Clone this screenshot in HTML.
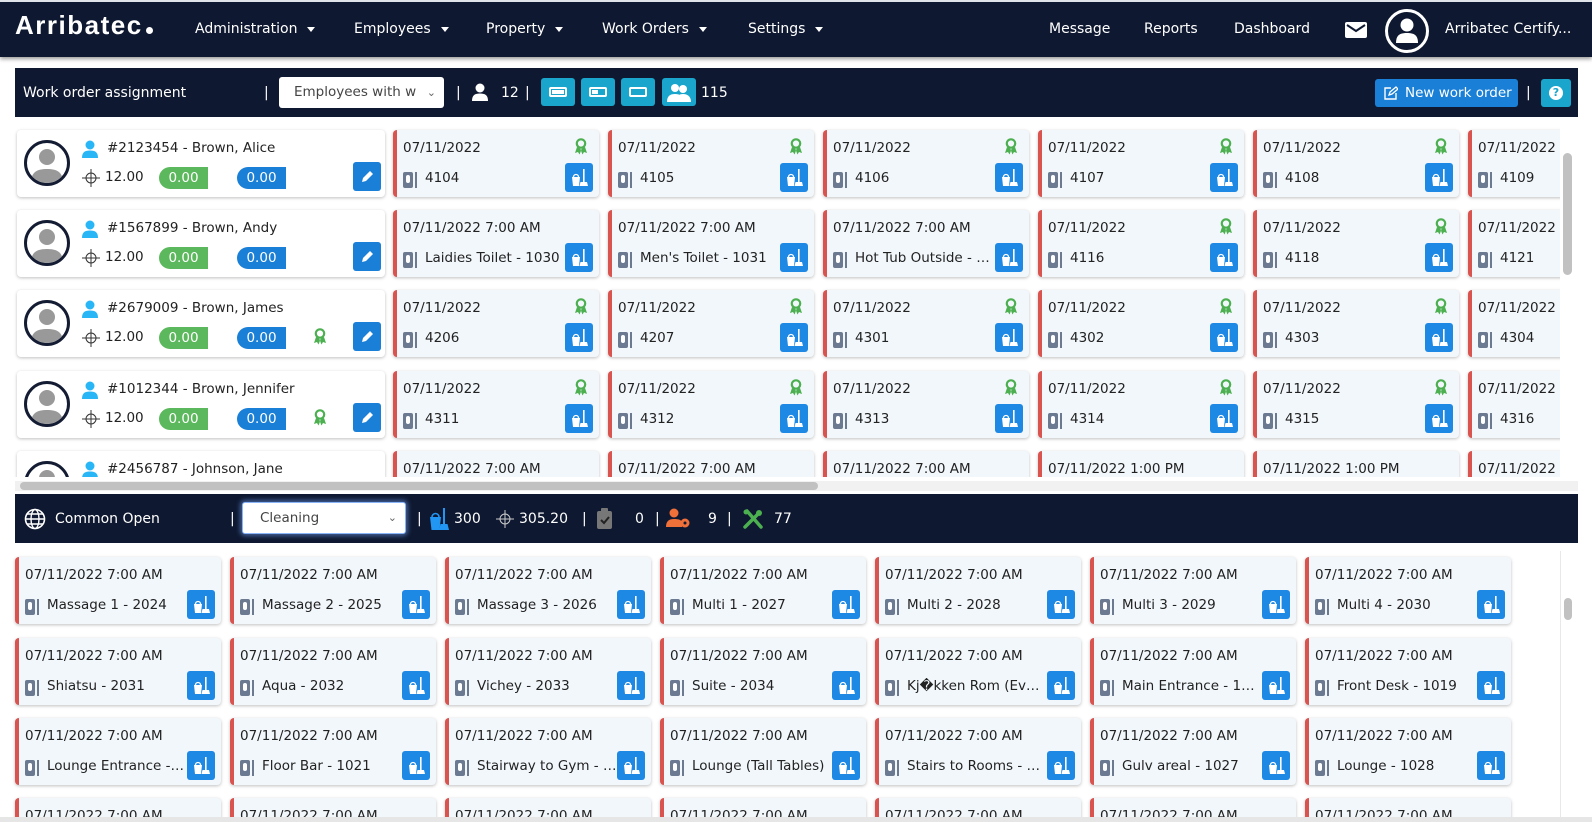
<!DOCTYPE html>
<html><head><meta charset="utf-8"><style>
*{box-sizing:border-box;margin:0;padding:0}
html,body{width:1592px;height:822px;overflow:hidden}
body{background:#fff;font-family:"DejaVu Sans","Liberation Sans",sans-serif;color:#222;position:relative}
.a{position:absolute}
.nav{left:0;top:0;width:1592px;height:57px;background:#0e1830;border-top:2px solid #dfe3ea;box-shadow:0 2px 4px rgba(0,0,0,.4)}
.nav .m{position:absolute;top:19px;color:#fff;font-size:14px;white-space:nowrap}
.caret{display:inline-block;width:0;height:0;border-left:4px solid transparent;border-right:4px solid transparent;border-top:5px solid #fff;margin-left:10px;vertical-align:middle}
.bar{background:#0e1830;color:#fff;font-size:14px}
.bar .t{position:absolute;top:50%;transform:translateY(-50%);white-space:nowrap}
.card{position:absolute;width:206px;height:67px;background:#f2f7fb;border-left:4px solid #d9534f;border-radius:4px;box-shadow:0 1px 3px rgba(0,0,0,.25);font-size:13.5px;overflow:hidden}
.card .d{position:absolute;left:6px;top:10px;white-space:nowrap}
.card .k{position:absolute;left:6px;top:42px;width:10px;height:16px;background:#6b7a90;border-radius:2px}
.card .k:after{content:"";position:absolute;left:3px;top:3px;width:4px;height:8px;background:#fff;border-radius:2px}
.card .k:before{content:"";position:absolute;left:12px;top:0;width:2px;height:16px;background:#6b7a90}
.card .n{position:absolute;left:28px;top:40px;white-space:nowrap;width:140px;overflow:hidden;text-overflow:ellipsis}
.btn{position:absolute;width:28px;height:29px;background:#1e88e5;border-radius:3px}
.card .btn{right:6px;top:33px}
.rib{position:absolute;width:14px;height:17px}
.card .rib{right:11px;top:8px}
.emp{position:absolute;left:17px;width:368px;height:67px;background:#fff;border-radius:4px;box-shadow:0 1px 3px rgba(0,0,0,.25);font-size:13.5px}
.av{position:absolute;left:7px;top:10px;width:46px;height:46px;border:3px solid #141c33;border-radius:50%;overflow:hidden;background:#fff}
.pill{position:absolute;top:37px;width:49px;height:22px;color:#fff;text-align:center;line-height:22px;font-size:13.5px;border-radius:11px 0 0 11px}
</style></head><body>
<svg width="0" height="0" style="position:absolute"><defs>
<symbol id="bk" viewBox="0 0 28 29"><path d="M7 14h8l-1 9H8z" fill="#fff"/><path d="M8.5 14a2.5 2.5 0 0 1 5 0" fill="none" stroke="#fff" stroke-width="1.3"/><rect x="18" y="6" width="1.6" height="13" fill="#fff"/><path d="M15.5 19h6.5l1 4h-8.5z" fill="#fff"/></symbol>
<symbol id="rb" viewBox="0 0 14 17"><circle cx="7" cy="5.5" r="4.2" fill="none" stroke="#4caf50" stroke-width="2.2"/><path d="M3 9l-2 6 3-1 1.5 2.5 2-5zM11 9l2 6-3-1-1.5 2.5-2-5z" fill="#4caf50"/></symbol>
<symbol id="pu" viewBox="0 0 16 18"><circle cx="8" cy="5" r="4.5" fill="#29b6f6"/><path d="M0 18c0-6 3-7.5 8-7.5s8 1.5 8 7.5z" fill="#29b6f6"/></symbol>
<symbol id="ch" viewBox="0 0 18 18"><circle cx="9" cy="9" r="5" fill="none" stroke="#333" stroke-width="1"/><path d="M9 0v18M0 9h18" stroke="#333" stroke-width="1"/></symbol>
<symbol id="avp" viewBox="0 0 40 40"><circle cx="20" cy="14" r="8" fill="#999"/><path d="M4 40c0-11 6-14 16-14s16 3 16 14z" fill="#999"/></symbol>
</defs></svg>

<div class="a nav">
<div class="m" style="left:15px;top:8px;font-size:26px;font-family:'Liberation Sans',sans-serif;font-weight:bold;letter-spacing:1.5px">Arribatec<span style="display:inline-block;width:7px;height:7px;background:#fff;border-radius:50%;margin-left:3px"></span></div>
<div class="m" style="left:195px">Administration<span class="caret"></span></div>
<div class="m" style="left:354px">Employees<span class="caret"></span></div>
<div class="m" style="left:486px">Property<span class="caret"></span></div>
<div class="m" style="left:602px">Work Orders<span class="caret"></span></div>
<div class="m" style="left:748px">Settings<span class="caret"></span></div>
<div class="m" style="left:1049px">Message</div>
<div class="m" style="left:1144px">Reports</div>
<div class="m" style="left:1234px">Dashboard</div>
<svg class="a" style="left:1345px;top:20px" width="22" height="16" viewBox="0 0 22 16"><rect x="0" y="0" width="22" height="16" rx="2" fill="#fff"/><path d="M2 3l9 6 9-6" fill="none" stroke="#0e1830" stroke-width="2"/></svg>
<div class="a" style="left:1385px;top:7px;width:44px;height:44px;border:3px solid #fff;border-radius:50%;overflow:hidden"><svg width="38" height="38" viewBox="0 0 38 38"><circle cx="19" cy="13" r="6.5" fill="#fff"/><path d="M8 31c0-8 4-10 11-10s11 2 11 10z" fill="#fff"/></svg></div>
<div class="m" style="left:1445px">Arribatec Certify...</div>
</div>

<div class="a bar" style="left:15px;top:68px;width:1563px;height:49px">
<div class="t" style="left:8px">Work order assignment</div>
<div class="t" style="left:249px">|</div>
<div class="a" style="left:264px;top:9px;width:165px;height:31px;background:#fff;border-radius:3px;color:#444;font-size:13.5px;line-height:31px;padding-left:15px">Employees with w<span style="position:absolute;right:8px;color:#666;font-size:11px">&#8964;</span></div>
<div class="t" style="left:441px">|</div>
<svg class="a" style="left:457px;top:15px" width="16" height="18"><circle cx="8" cy="5" r="4.5" fill="#fff"/><path d="M0 18c0-6 3-7.5 8-7.5s8 1.5 8 7.5z" fill="#fff"/></svg>
<div class="t" style="left:486px">12</div>
<div class="t" style="left:510px">|</div>
<div class="a" style="left:526px;top:10px;width:34px;height:28px;background:#1aa6cc;border-radius:3px"><div style="position:absolute;left:8px;top:9px;width:18px;height:10px;border:2px solid #fff;border-radius:2px"><div style="margin:1px;height:4px;background:#fff"></div></div></div>
<div class="a" style="left:566px;top:10px;width:34px;height:28px;background:#1aa6cc;border-radius:3px"><div style="position:absolute;left:8px;top:9px;width:18px;height:10px;border:2px solid #fff;border-radius:2px"><div style="margin:1px;width:6px;height:4px;background:#fff"></div></div></div>
<div class="a" style="left:606px;top:10px;width:34px;height:28px;background:#1aa6cc;border-radius:3px"><div style="position:absolute;left:8px;top:9px;width:18px;height:10px;border:2px solid #fff;border-radius:2px"></div></div>
<div class="a" style="left:647px;top:10px;width:34px;height:28px;background:#1aa6cc;border-radius:3px"><svg width="34" height="28"><circle cx="13" cy="10" r="4" fill="#fff"/><path d="M5 24c0-6 3-8 8-8s8 2 8 8z" fill="#fff"/><circle cx="21" cy="11" r="4" fill="#fff"/><path d="M14 24c0-6 3-8 7-8s8 2 8 8z" fill="#fff"/></svg></div>
<div class="t" style="left:686px">115</div>
<div class="a" style="left:1360px;top:11px;width:143px;height:28px;background:#1a7fd6;border-radius:3px;font-size:13.5px;line-height:28px;padding-left:30px;white-space:nowrap">New work order<svg class="a" style="left:9px;top:7px" width="14" height="14" viewBox="0 0 14 14"><path d="M7 2H1v11h11V7" fill="none" stroke="#fff" stroke-width="1.4"/><path d="M5 9l1-3 6-5 2 2-6 5z" fill="none" stroke="#fff" stroke-width="1.3"/></svg></div>
<div class="t" style="left:1511px">|</div>
<div class="a" style="left:1526px;top:11px;width:30px;height:28px;background:#1aa6cc;border-radius:3px"><div style="position:absolute;left:8px;top:7px;width:14px;height:14px;border-radius:50%;background:#fff;color:#1aa6cc;font-size:11px;font-weight:bold;text-align:center;line-height:14px">?</div></div>
</div>

<div class="a" style="left:0;top:120px;width:1560px;height:357px;overflow:hidden">
<div class="emp" style="top:10px"><div class="av"><svg width="40" height="40"><use href="#avp"/></svg></div><svg class="a" style="left:65px;top:10px" width="16" height="18"><use href="#pu"/></svg><div class="a" style="left:90px;top:10px">#2123454 - Brown, Alice</div><svg class="a" style="left:65px;top:39px" width="18" height="18"><use href="#ch"/></svg><div class="a" style="left:88px;top:39px">12.00</div><div class="pill" style="left:142px;background:#5cb85c">0.00</div><div class="pill" style="left:220px;background:#1a7fd6">0.00</div><div class="btn" style="left:336px;top:32px;background:#1a7fd6"><svg width="28" height="29"><path d="M9 20l1-4 7-7 3 3-7 7z" fill="#fff"/></svg></div></div>
<div class="emp" style="top:90px"><div class="av"><svg width="40" height="40"><use href="#avp"/></svg></div><svg class="a" style="left:65px;top:10px" width="16" height="18"><use href="#pu"/></svg><div class="a" style="left:90px;top:10px">#1567899 - Brown, Andy</div><svg class="a" style="left:65px;top:39px" width="18" height="18"><use href="#ch"/></svg><div class="a" style="left:88px;top:39px">12.00</div><div class="pill" style="left:142px;background:#5cb85c">0.00</div><div class="pill" style="left:220px;background:#1a7fd6">0.00</div><div class="btn" style="left:336px;top:32px;background:#1a7fd6"><svg width="28" height="29"><path d="M9 20l1-4 7-7 3 3-7 7z" fill="#fff"/></svg></div></div>
<div class="emp" style="top:170px"><div class="av"><svg width="40" height="40"><use href="#avp"/></svg></div><svg class="a" style="left:65px;top:10px" width="16" height="18"><use href="#pu"/></svg><div class="a" style="left:90px;top:10px">#2679009 - Brown, James</div><svg class="a" style="left:65px;top:39px" width="18" height="18"><use href="#ch"/></svg><div class="a" style="left:88px;top:39px">12.00</div><div class="pill" style="left:142px;background:#5cb85c">0.00</div><div class="pill" style="left:220px;background:#1a7fd6">0.00</div><svg class="rib" style="left:296px;top:38px"><use href="#rb"/></svg><div class="btn" style="left:336px;top:32px;background:#1a7fd6"><svg width="28" height="29"><path d="M9 20l1-4 7-7 3 3-7 7z" fill="#fff"/></svg></div></div>
<div class="emp" style="top:251px"><div class="av"><svg width="40" height="40"><use href="#avp"/></svg></div><svg class="a" style="left:65px;top:10px" width="16" height="18"><use href="#pu"/></svg><div class="a" style="left:90px;top:10px">#1012344 - Brown, Jennifer</div><svg class="a" style="left:65px;top:39px" width="18" height="18"><use href="#ch"/></svg><div class="a" style="left:88px;top:39px">12.00</div><div class="pill" style="left:142px;background:#5cb85c">0.00</div><div class="pill" style="left:220px;background:#1a7fd6">0.00</div><svg class="rib" style="left:296px;top:38px"><use href="#rb"/></svg><div class="btn" style="left:336px;top:32px;background:#1a7fd6"><svg width="28" height="29"><path d="M9 20l1-4 7-7 3 3-7 7z" fill="#fff"/></svg></div></div>
<div class="emp" style="top:331px"><div class="av"><svg width="40" height="40"><use href="#avp"/></svg></div><svg class="a" style="left:65px;top:10px" width="16" height="18"><use href="#pu"/></svg><div class="a" style="left:90px;top:10px">#2456787 - Johnson, Jane</div></div>

<div class="card" style="left:393px;top:10px"><div class="d">07/11/2022</div><svg class="rib"><use href="#rb"/></svg><div class="k"></div><div class="n">4104</div><svg class="btn"><use href="#bk"/></svg></div>
<div class="card" style="left:608px;top:10px"><div class="d">07/11/2022</div><svg class="rib"><use href="#rb"/></svg><div class="k"></div><div class="n">4105</div><svg class="btn"><use href="#bk"/></svg></div>
<div class="card" style="left:823px;top:10px"><div class="d">07/11/2022</div><svg class="rib"><use href="#rb"/></svg><div class="k"></div><div class="n">4106</div><svg class="btn"><use href="#bk"/></svg></div>
<div class="card" style="left:1038px;top:10px"><div class="d">07/11/2022</div><svg class="rib"><use href="#rb"/></svg><div class="k"></div><div class="n">4107</div><svg class="btn"><use href="#bk"/></svg></div>
<div class="card" style="left:1253px;top:10px"><div class="d">07/11/2022</div><svg class="rib"><use href="#rb"/></svg><div class="k"></div><div class="n">4108</div><svg class="btn"><use href="#bk"/></svg></div>
<div class="card" style="left:1468px;top:10px"><div class="d">07/11/2022</div><div class="k"></div><div class="n">4109</div></div>

<div class="card" style="left:393px;top:90px"><div class="d">07/11/2022 7:00 AM</div><div class="k"></div><div class="n">Laidies Toilet - 1030</div><svg class="btn"><use href="#bk"/></svg></div>
<div class="card" style="left:608px;top:90px"><div class="d">07/11/2022 7:00 AM</div><div class="k"></div><div class="n">Men's Toilet - 1031</div><svg class="btn"><use href="#bk"/></svg></div>
<div class="card" style="left:823px;top:90px"><div class="d">07/11/2022 7:00 AM</div><div class="k"></div><div class="n">Hot Tub Outside - 1032</div><svg class="btn"><use href="#bk"/></svg></div>
<div class="card" style="left:1038px;top:90px"><div class="d">07/11/2022</div><svg class="rib"><use href="#rb"/></svg><div class="k"></div><div class="n">4116</div><svg class="btn"><use href="#bk"/></svg></div>
<div class="card" style="left:1253px;top:90px"><div class="d">07/11/2022</div><svg class="rib"><use href="#rb"/></svg><div class="k"></div><div class="n">4118</div><svg class="btn"><use href="#bk"/></svg></div>
<div class="card" style="left:1468px;top:90px"><div class="d">07/11/2022</div><div class="k"></div><div class="n">4121</div></div>

<div class="card" style="left:393px;top:170px"><div class="d">07/11/2022</div><svg class="rib"><use href="#rb"/></svg><div class="k"></div><div class="n">4206</div><svg class="btn"><use href="#bk"/></svg></div>
<div class="card" style="left:608px;top:170px"><div class="d">07/11/2022</div><svg class="rib"><use href="#rb"/></svg><div class="k"></div><div class="n">4207</div><svg class="btn"><use href="#bk"/></svg></div>
<div class="card" style="left:823px;top:170px"><div class="d">07/11/2022</div><svg class="rib"><use href="#rb"/></svg><div class="k"></div><div class="n">4301</div><svg class="btn"><use href="#bk"/></svg></div>
<div class="card" style="left:1038px;top:170px"><div class="d">07/11/2022</div><svg class="rib"><use href="#rb"/></svg><div class="k"></div><div class="n">4302</div><svg class="btn"><use href="#bk"/></svg></div>
<div class="card" style="left:1253px;top:170px"><div class="d">07/11/2022</div><svg class="rib"><use href="#rb"/></svg><div class="k"></div><div class="n">4303</div><svg class="btn"><use href="#bk"/></svg></div>
<div class="card" style="left:1468px;top:170px"><div class="d">07/11/2022</div><div class="k"></div><div class="n">4304</div></div>

<div class="card" style="left:393px;top:251px"><div class="d">07/11/2022</div><svg class="rib"><use href="#rb"/></svg><div class="k"></div><div class="n">4311</div><svg class="btn"><use href="#bk"/></svg></div>
<div class="card" style="left:608px;top:251px"><div class="d">07/11/2022</div><svg class="rib"><use href="#rb"/></svg><div class="k"></div><div class="n">4312</div><svg class="btn"><use href="#bk"/></svg></div>
<div class="card" style="left:823px;top:251px"><div class="d">07/11/2022</div><svg class="rib"><use href="#rb"/></svg><div class="k"></div><div class="n">4313</div><svg class="btn"><use href="#bk"/></svg></div>
<div class="card" style="left:1038px;top:251px"><div class="d">07/11/2022</div><svg class="rib"><use href="#rb"/></svg><div class="k"></div><div class="n">4314</div><svg class="btn"><use href="#bk"/></svg></div>
<div class="card" style="left:1253px;top:251px"><div class="d">07/11/2022</div><svg class="rib"><use href="#rb"/></svg><div class="k"></div><div class="n">4315</div><svg class="btn"><use href="#bk"/></svg></div>
<div class="card" style="left:1468px;top:251px"><div class="d">07/11/2022</div><div class="k"></div><div class="n">4316</div></div>

<div class="card" style="left:393px;top:331px"><div class="d">07/11/2022 7:00 AM</div></div>
<div class="card" style="left:608px;top:331px"><div class="d">07/11/2022 7:00 AM</div></div>
<div class="card" style="left:823px;top:331px"><div class="d">07/11/2022 7:00 AM</div></div>
<div class="card" style="left:1038px;top:331px"><div class="d">07/11/2022 1:00 PM</div></div>
<div class="card" style="left:1253px;top:331px"><div class="d">07/11/2022 1:00 PM</div></div>
<div class="card" style="left:1468px;top:331px"><div class="d">07/11/2022</div></div>
</div>
<div class="a" style="left:1560px;top:120px;width:18px;height:357px;background:#fff"></div>
<div class="a" style="left:1563px;top:153px;width:9px;height:122px;background:#c1c1c1;border-radius:5px"></div>
<div class="a" style="left:15px;top:481px;width:1563px;height:10px;background:#f1f1f1"></div>
<div class="a" style="left:20px;top:482px;width:798px;height:8px;background:#c1c1c1;border-radius:4px"></div>

<div class="a bar" style="left:15px;top:494px;width:1563px;height:49px">
<svg class="a" style="left:9px;top:14px" width="22" height="22" viewBox="0 0 22 22"><circle cx="11" cy="11" r="9.5" fill="none" stroke="#fff" stroke-width="1.6"/><ellipse cx="11" cy="11" rx="4" ry="9.5" fill="none" stroke="#fff" stroke-width="1.4"/><path d="M1.5 11h19M3 6h16M3 16h16" stroke="#fff" stroke-width="1.4"/></svg>
<div class="t" style="left:40px">Common Open</div>
<div class="t" style="left:215px">|</div>
<div class="a" style="left:227px;top:8px;width:164px;height:32px;background:#fff;border-radius:3px;border:1px solid #8ab4f8;box-shadow:0 0 5px 2px rgba(120,170,255,.5);color:#444;font-size:13.5px;line-height:30px;padding-left:17px">Cleaning<span style="position:absolute;right:8px;color:#666;font-size:11px">&#8964;</span></div>
<div class="t" style="left:402px">|</div>
<svg class="a" style="left:414px;top:13px" width="22" height="24" viewBox="0 0 22 24"><path d="M1 10h11l-1.5 13h-8z" fill="#2196f3"/><path d="M3 10a3.5 3.5 0 0 1 7 0" fill="none" stroke="#2196f3" stroke-width="1.6"/><rect x="14" y="1" width="2" height="16" fill="#2196f3"/><path d="M11.5 17h7l1.5 6h-10z" fill="#2196f3"/></svg>
<div class="t" style="left:439px">300</div>
<svg class="a" style="left:481px;top:16px" width="18" height="18"><circle cx="9" cy="9" r="5" fill="none" stroke="#ccc" stroke-width="1"/><path d="M9 0v18M0 9h18" stroke="#ccc" stroke-width="1"/></svg>
<div class="t" style="left:504px">305.20</div>
<div class="t" style="left:567px">|</div>
<svg class="a" style="left:582px;top:14px" width="15" height="21" viewBox="0 0 15 21"><rect x="0" y="3" width="15" height="18" rx="2" fill="#777"/><rect x="4" y="0" width="7" height="5" rx="1" fill="#777"/><path d="M4 12l3 3 5-6" fill="none" stroke="#222" stroke-width="2"/></svg>
<div class="t" style="left:620px">0</div>
<div class="t" style="left:640px">|</div>
<svg class="a" style="left:651px;top:14px" width="25" height="21" viewBox="0 0 25 21"><circle cx="8" cy="5" r="4.5" fill="#f0703a"/><path d="M0 19c0-6 3-8 8-8s7 1 8 3v5z" fill="#f0703a"/><circle cx="19" cy="15" r="4.5" fill="#f0703a"/><circle cx="19" cy="15" r="1.5" fill="#0e1830"/></svg>
<div class="t" style="left:693px">9</div>
<div class="t" style="left:712px">|</div>
<svg class="a" style="left:727px;top:14px" width="22" height="22" viewBox="0 0 22 22"><path d="M3 19L17 5M5 3l14 16" stroke="#4caf50" stroke-width="3.5" stroke-linecap="round"/><circle cx="17" cy="5" r="3" fill="#4caf50"/><circle cx="4" cy="4" r="2.5" fill="#4caf50"/></svg>
<div class="t" style="left:759px">77</div>
</div>

<div class="a" style="left:0;top:546px;width:1560px;height:271px;overflow:hidden">
<div class="card" style="left:15px;top:11px"><div class="d">07/11/2022 7:00 AM</div><div class="k"></div><div class="n">Massage 1 - 2024</div><svg class="btn"><use href="#bk"/></svg></div>
<div class="card" style="left:230px;top:11px"><div class="d">07/11/2022 7:00 AM</div><div class="k"></div><div class="n">Massage 2 - 2025</div><svg class="btn"><use href="#bk"/></svg></div>
<div class="card" style="left:445px;top:11px"><div class="d">07/11/2022 7:00 AM</div><div class="k"></div><div class="n">Massage 3 - 2026</div><svg class="btn"><use href="#bk"/></svg></div>
<div class="card" style="left:660px;top:11px"><div class="d">07/11/2022 7:00 AM</div><div class="k"></div><div class="n">Multi 1 - 2027</div><svg class="btn"><use href="#bk"/></svg></div>
<div class="card" style="left:875px;top:11px"><div class="d">07/11/2022 7:00 AM</div><div class="k"></div><div class="n">Multi 2 - 2028</div><svg class="btn"><use href="#bk"/></svg></div>
<div class="card" style="left:1090px;top:11px"><div class="d">07/11/2022 7:00 AM</div><div class="k"></div><div class="n">Multi 3 - 2029</div><svg class="btn"><use href="#bk"/></svg></div>
<div class="card" style="left:1305px;top:11px"><div class="d">07/11/2022 7:00 AM</div><div class="k"></div><div class="n">Multi 4 - 2030</div><svg class="btn"><use href="#bk"/></svg></div>

<div class="card" style="left:15px;top:92px"><div class="d">07/11/2022 7:00 AM</div><div class="k"></div><div class="n">Shiatsu - 2031</div><svg class="btn"><use href="#bk"/></svg></div>
<div class="card" style="left:230px;top:92px"><div class="d">07/11/2022 7:00 AM</div><div class="k"></div><div class="n">Aqua - 2032</div><svg class="btn"><use href="#bk"/></svg></div>
<div class="card" style="left:445px;top:92px"><div class="d">07/11/2022 7:00 AM</div><div class="k"></div><div class="n">Vichey - 2033</div><svg class="btn"><use href="#bk"/></svg></div>
<div class="card" style="left:660px;top:92px"><div class="d">07/11/2022 7:00 AM</div><div class="k"></div><div class="n">Suite - 2034</div><svg class="btn"><use href="#bk"/></svg></div>
<div class="card" style="left:875px;top:92px"><div class="d">07/11/2022 7:00 AM</div><div class="k"></div><div class="n">Kj�kken Rom (Every)</div><svg class="btn"><use href="#bk"/></svg></div>
<div class="card" style="left:1090px;top:92px"><div class="d">07/11/2022 7:00 AM</div><div class="k"></div><div class="n">Main Entrance - 1018</div><svg class="btn"><use href="#bk"/></svg></div>
<div class="card" style="left:1305px;top:92px"><div class="d">07/11/2022 7:00 AM</div><div class="k"></div><div class="n">Front Desk - 1019</div><svg class="btn"><use href="#bk"/></svg></div>

<div class="card" style="left:15px;top:172px"><div class="d">07/11/2022 7:00 AM</div><div class="k"></div><div class="n">Lounge Entrance - 1020</div><svg class="btn"><use href="#bk"/></svg></div>
<div class="card" style="left:230px;top:172px"><div class="d">07/11/2022 7:00 AM</div><div class="k"></div><div class="n">Floor Bar - 1021</div><svg class="btn"><use href="#bk"/></svg></div>
<div class="card" style="left:445px;top:172px"><div class="d">07/11/2022 7:00 AM</div><div class="k"></div><div class="n">Stairway to Gym - 1022</div><svg class="btn"><use href="#bk"/></svg></div>
<div class="card" style="left:660px;top:172px"><div class="d">07/11/2022 7:00 AM</div><div class="k"></div><div class="n">Lounge (Tall Tables)</div><svg class="btn"><use href="#bk"/></svg></div>
<div class="card" style="left:875px;top:172px"><div class="d">07/11/2022 7:00 AM</div><div class="k"></div><div class="n">Stairs to Rooms - 1026</div><svg class="btn"><use href="#bk"/></svg></div>
<div class="card" style="left:1090px;top:172px"><div class="d">07/11/2022 7:00 AM</div><div class="k"></div><div class="n">Gulv areal - 1027</div><svg class="btn"><use href="#bk"/></svg></div>
<div class="card" style="left:1305px;top:172px"><div class="d">07/11/2022 7:00 AM</div><div class="k"></div><div class="n">Lounge - 1028</div><svg class="btn"><use href="#bk"/></svg></div>

<div class="card" style="left:15px;top:252px"><div class="d">07/11/2022 7:00 AM</div></div>
<div class="card" style="left:230px;top:252px"><div class="d">07/11/2022 7:00 AM</div></div>
<div class="card" style="left:445px;top:252px"><div class="d">07/11/2022 7:00 AM</div></div>
<div class="card" style="left:660px;top:252px"><div class="d">07/11/2022 7:00 AM</div></div>
<div class="card" style="left:875px;top:252px"><div class="d">07/11/2022 7:00 AM</div></div>
<div class="card" style="left:1090px;top:252px"><div class="d">07/11/2022 7:00 AM</div></div>
<div class="card" style="left:1305px;top:252px"><div class="d">07/11/2022 7:00 AM</div></div>
</div>
<div class="a" style="left:1560px;top:551px;width:1px;height:266px;background:#e8e8e8"></div>
<div class="a" style="left:1564px;top:598px;width:8px;height:22px;background:#c1c1c1;border-radius:4px"></div>
<div class="a" style="left:0;top:817px;width:1592px;height:5px;background:#e6e6e6"></div>
</body></html>
